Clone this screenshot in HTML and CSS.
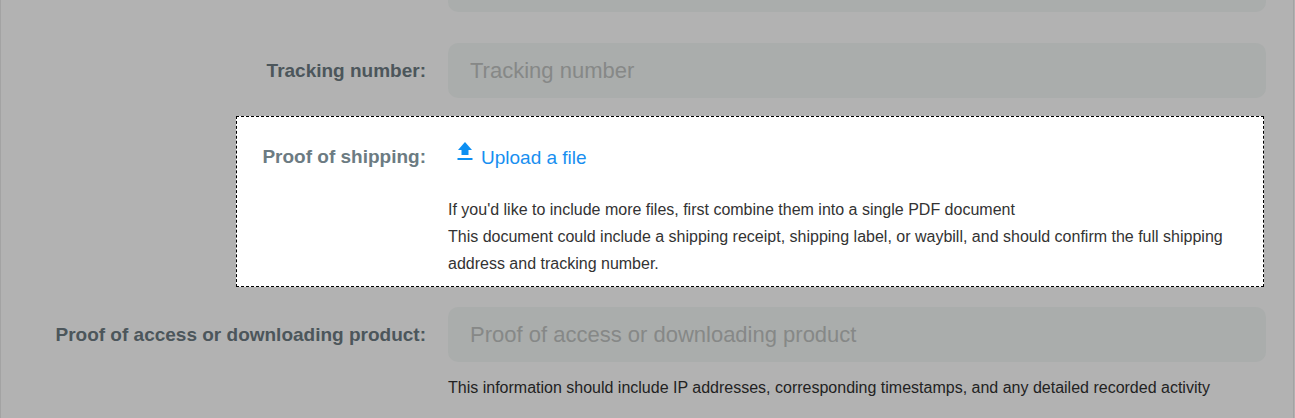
FILE: index.html
```
<!DOCTYPE html>
<html lang="en">

<head>
  <meta charset="UTF-8">
  <meta name="viewport" content="width=device-width, initial-scale=1.0">
  <title>Proof of shipping</title>
  <link rel="stylesheet" href="styles.css">
</head>

<body>
  <form class="dispute-form">
    <div class="form-row">
      <input class="field field-cut" type="text" aria-label="Carrier">
    </div>

    <div class="form-row">
      <label for="tracking">Tracking number:</label>
      <input class="field" type="text" id="tracking" placeholder="Tracking number">
    </div>

    <div class="form-row highlight">
      <label for="upload">Proof of shipping:</label>
      <div class="upload-cell">
        <button class="upload" type="button" id="upload">
          <svg width="16" height="19" viewBox="0 0 16 19" aria-hidden="true">
            <path d="M8 0L15 8H11.500V13H4.500V8H1Z M0.500 16H15.500V18H0.500Z" fill="#0c8ff2"/>
          </svg>
          <span>Upload a file</span>
        </button>
        <p class="help">If you'd like to include more files, first combine them into a single PDF document<br>
          This document could include a shipping receipt, shipping label, or waybill, and should confirm the full shipping address and tracking number.</p>
      </div>
    </div>

    <div class="form-row">
      <label for="access">Proof of access or downloading product:</label>
      <div>
        <input class="field" type="text" id="access" placeholder="Proof of access or downloading product">
        <p class="help">This information should include IP addresses, corresponding timestamps, and any detailed recorded activity</p>
      </div>
    </div>
  </form>
</body>

</html>
```

FILE: styles.css
```
* {
  box-sizing: border-box;
}

body {
  font-family: Arial, "Liberation Sans", sans-serif;
  background: #b2b2b2;
  margin: 0;
}

.dispute-form {
  min-height: 100vh;
  margin-right: 1px;
  border-left: 1px solid #a3a3a3;
  border-right: 1px solid #a3a3a3;
}

.form-row {
  display: grid;
  grid-template-columns: 425px 1fr;
  column-gap: 22px;
  padding-right: 27px;
}

.form-row label {
  padding-top: 14px;
  color: #4c565b;
  font-size: 19px;
  font-weight: bold;
  line-height: 27px;
  text-align: right;
}

.field {
  display: block;
  grid-column: 2;
  width: 100%;
  height: 55px;
  padding: 0 22px;
  border: none;
  border-radius: 10px;
  background: #aaadac;
  color: #333;
  font-family: inherit;
  font-size: 22px;
}

.field::placeholder {
  color: #868887;
  opacity: 1;
}

.field-cut {
  height: 12px;
  margin-bottom: 31px;
  border-radius: 0 0 10px 10px;
}

.highlight {
  grid-template-columns: 189px 1fr;
  margin: 18px 29px 20px 235px;
  padding: 12px 14px 9px 0;
  border: 1px dashed #000;
  background: #fff;
}

.highlight label {
  color: #6c7b82;
}

.upload {
  display: flex;
  align-items: flex-start;
  gap: 8px;
  padding: 13px 9px;
  border: none;
  background: none;
  color: #188ff0;
  font-family: inherit;
  font-size: 19px;
  line-height: 23px;
  cursor: pointer;
}

.upload span {
  padding-top: 4px;
}

.help {
  margin: 12px 0 0;
  color: #222;
  font-size: 16px;
  line-height: 27px;
}

.highlight .help {
  margin-top: 14px;
  color: #333;
}
```
